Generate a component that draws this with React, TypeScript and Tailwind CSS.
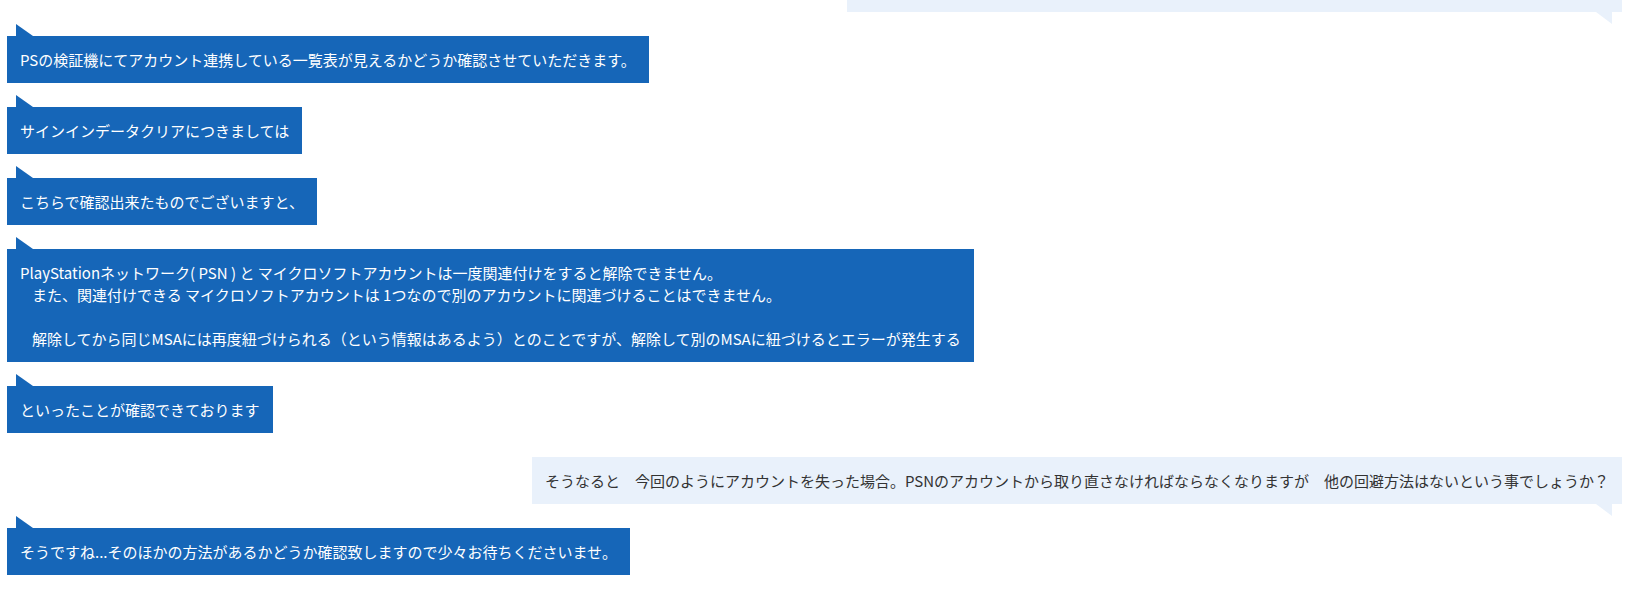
import React from "react";

type Msg =
  | { from: "agent"; lines: { text: string; indent?: boolean }[] }
  | { from: "user"; text: string; width?: string };

const messages: Msg[] = [
  { from: "agent", lines: [{ text: "PSの検証機にてアカウント連携している一覧表が見えるかどうか確認させていただきます。" }] },
  { from: "agent", lines: [{ text: "サインインデータクリアにつきましては" }] },
  { from: "agent", lines: [{ text: "こちらで確認出来たものでございますと、" }] },
  {
    from: "agent",
    lines: [
      { text: "PlayStationネットワーク( PSN ) と マイクロソフトアカウントは一度関連付けをすると解除できません。" },
      { text: "また、関連付けできる マイクロソフトアカウントは 1つなので別のアカウントに関連づけることはできません。", indent: true },
      { text: "" },
      {
        text: "解除してから同じMSAには再度紐づけられる（という情報はあるよう）とのことですが、解除して別のMSAに紐づけるとエラーが発生する",
        indent: true,
      },
    ],
  },
  { from: "agent", lines: [{ text: "といったことが確認できております" }] },
  {
    from: "user",
    text: "そうなると　今回のようにアカウントを失った場合。PSNのアカウントから取り直さなければならなくなりますが　他の回避方法はないという事でしょうか？",
  },
  { from: "agent", lines: [{ text: "そうですね...そのほかの方法があるかどうか確認致しますので少々お待ちくださいませ。" }] },
];

function AgentBubble({ lines }: { lines: { text: string; indent?: boolean }[] }) {
  return (
    <div className="flex pt-3">
      <div className="relative bg-[#1666b8] px-[13px] py-[12.5px] text-white">
        <svg className="absolute left-[9px] top-[-12px]" width="17" height="12" viewBox="0 0 17 12">
          <polygon points="0,0 0,12 17,12" fill="#1666b8" />
        </svg>
        {lines.map((l, i) => (
          <div key={i} className={l.indent ? "h-[22px] pl-[12px]" : "h-[22px]"}>
            {l.text}
          </div>
        ))}
      </div>
    </div>
  );
}

function UserBubble({ text, width }: { text?: string; width?: string }) {
  return (
    <div className="flex justify-end pt-3">
      <div className={`relative bg-[#e9f1fb] px-[13px] py-[12.5px] text-[#333333] ${width ?? ""}`}>
        <svg className="absolute right-[10px] bottom-[-12px]" width="16" height="12" viewBox="0 0 16 12">
          <polygon points="0,0 16,0 16,12" fill="#e9f1fb" />
        </svg>
        <div className="h-[22px]">{text}</div>
      </div>
    </div>
  );
}

export default function App() {
  return (
    <div className="h-[598px] w-full overflow-hidden bg-white font-['Noto_Sans_CJK_JP','Noto_Sans',sans-serif] text-[15px] leading-[22px]">
      <div className="-mt-[47px] flex flex-col gap-3 pl-[7px] pr-[4px]">
        <UserBubble width="w-[775px]" />
        {messages.map((m, i) =>
          m.from === "agent" ? (
            <AgentBubble key={i} lines={m.lines} />
          ) : (
            <UserBubble key={i} text={m.text} />
          ),
        )}
      </div>
    </div>
  );
}
